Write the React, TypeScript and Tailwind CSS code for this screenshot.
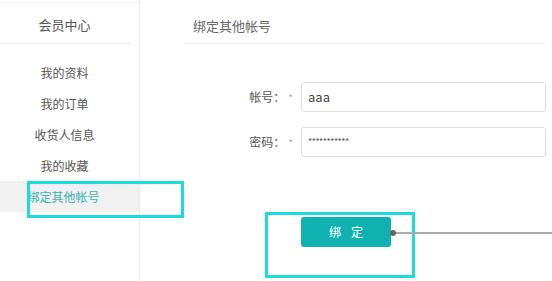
import React from 'react';

const menuItems = [
  { key: 'profile', title: '我的资料' },
  { key: 'orders', title: '我的订单' },
  { key: 'address', title: '收货人信息' },
  { key: 'favorites', title: '我的收藏' },
  { key: 'bind', title: '绑定其他帐号' },
];

const activeKey = 'bind';

const Sidebar: React.FC = () => (
  <aside className="w-[140px] shrink-0 h-full border-r border-[#ececec]">
    <div className="mt-[2px] border-t border-[#f2f2f2]" />
    <div className="mr-[8px] h-[41px] border-b border-[#eeeeee] flex items-center justify-center pr-[2px] pt-[4px] text-[13px] text-[#555]">
      会员中心
    </div>
    <ul className="pt-[13px]">
      {menuItems.map(item => (
        <li
          key={item.key}
          className={
            item.key === activeKey
              ? 'h-[31px] flex items-center justify-center pr-[12px] text-[12px] text-[#3ab4b2] bg-[#f1f1f1]'
              : 'h-[31px] flex items-center justify-center pr-[10px] text-[12px] text-[#555]'
          }
        >
          {item.title}
        </li>
      ))}
    </ul>
  </aside>
);

const FormRow: React.FC<{ label: string; children: React.ReactNode }> = ({ label, children }) => (
  <div className="flex items-center h-[30px]">
    <div className="w-[116px] flex items-center justify-end pr-[8px]">
      <span className="text-[12px] text-[#555]">{label}：</span>
      <span className="ml-[3px] text-[10px] text-[#aaa]">*</span>
    </div>
    <div className="flex-1 h-full border border-[#dedede] rounded-[3px] flex items-center pl-[6px]">
      {children}
    </div>
  </div>
);

const BindPanel: React.FC = () => (
  <main className="flex-1 h-full pl-[45px] pr-[6px]">
    <div className="h-[44px] border-b border-[#eeeeee] flex items-center pl-[8px] pt-[9px] text-[13px] text-[#666]">
      绑定其他帐号
    </div>
    <div className="mt-[38px] flex flex-col gap-[15px]">
      <FormRow label="帐号">
        <span className="text-[13px] text-[#444]">aaa</span>
      </FormRow>
      <FormRow label="密码">
        <span className="text-[9px] text-[#555] tracking-[-0.5px]">***********</span>
      </FormRow>
    </div>
    <div className="mt-[60px] pl-[116px]">
      <button className="w-[90px] h-[30px] rounded-[3px] bg-[#0fb2b0] text-white text-[12px] flex items-center justify-center gap-[10px]">
        <span>绑</span>
        <span>定</span>
      </button>
    </div>
  </main>
);

export default function App() {
  return (
    <div
      className="relative w-[552px] h-[281px] overflow-hidden bg-white flex"
      style={{ fontFamily: '"Noto Sans CJK SC", "Noto Sans", sans-serif' }}
    >
      <Sidebar />
      <BindPanel />

      {/* annotation overlays */}
      <div className="absolute left-[27px] top-[181px] w-[157px] h-[37px] border-[3px] border-[#1cdade]" />
      <div className="absolute left-[265px] top-[212px] w-[150px] h-[66px] border-[3px] border-[#1cdade]" />
      <div className="absolute left-[393px] top-[232px] w-[159px] h-[2px] bg-[#aaaaaa]" />
      <div className="absolute left-[390px] top-[230px] w-[6px] h-[6px] rounded-full bg-[#666]" />
    </div>
  );
}
